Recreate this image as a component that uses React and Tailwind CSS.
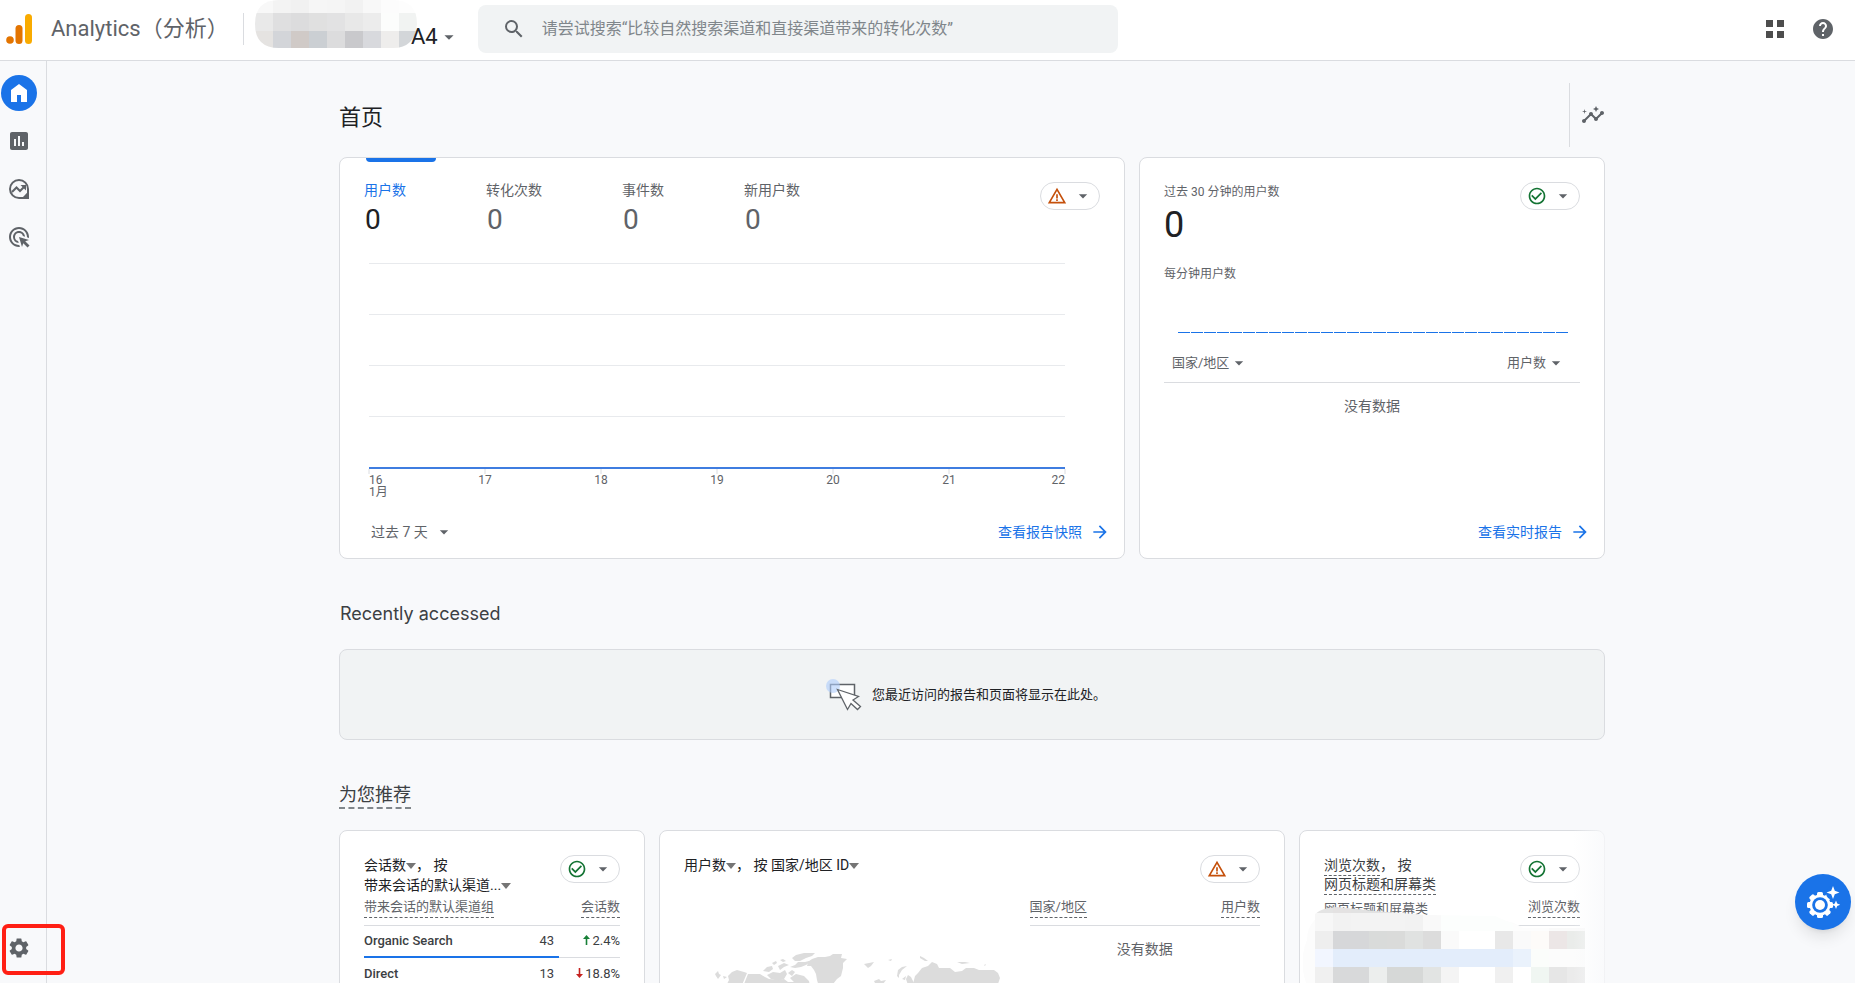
import { useState } from 'react';
import {
  MdAdsClick,
  MdArrowDropDown,
  MdArrowForward,
  MdCheckCircleOutline,
  MdHelp,
  MdInsertChart,
  MdInsights,
  MdSearch,
  MdSettings,
  MdWarningAmber,
} from 'react-icons/md';

const METRICS = [
  { label: '用户数', value: 0 },
  { label: '转化次数', value: 0 },
  { label: '事件数', value: 0 },
  { label: '新用户数', value: 0 },
];

const DAYS = ['16', '17', '18', '19', '20', '21', '22'];

const CHANNELS = [
  { name: 'Organic Search', value: 43, change: '2.4%', up: true, share: 76 },
  { name: 'Direct', value: 13, change: '18.8%', up: false, share: 23 },
];

// Pixel blocks that hide the account name
const ACCOUNT_BLOCKS = [
  ['#f8f8f8', '#f3f3f3', '#f1f1f1', '#f6f6f6', '#f5f5f5', '#f2f2f2', '#f8f8f8', '#fcfcfc', '#fdfdfd'],
  ['#e9e9e9', '#dfdfe0', '#dcdcdd', '#e0e0e0', '#e2e2e3', '#e8e8e8', '#ececec', '#fcfdfc', '#f1f3f2'],
  ['#e5e3e1', '#d3d5d9', '#d0cac7', '#cbcfd3', '#dcdcdd', '#c9c9cc', '#d8d9dd', '#eeedec', '#d3d6d9'],
];

// Pixel blocks that hide the page titles
const PAGE_BLOCKS = [
  ['#e4e4e4', '#e4e2e2', '#e2e2e2', '#e2e2e2', '#e0e0e0', '#dedede', '#fafafa', '#fdfffe', '#fdfffe', '#fdfffe', '#fdfffe', '#fefefe', '#fefefe', '#fefefe', '#fefefe'],
  ['#f7f7f7', '#f2f2f2', '#f3f3f3', '#f3f3f3', '#f3f3f3', '#f2f2f2', '#f9f9f9', '#fcfefd', '#fcfefd', '#fcfefd', '#fcfefd', '#fdfdfd', '#fdfdfd', '#fafafa', '#fafafa'],
  ['#eeeeee', '#d6d7d9', '#d6d7d9', '#d9dbda', '#dadbda', '#e0e2e1', '#dcdcdc', '#fafafa', '#ffffff', '#ffffff', '#e8e8e8', '#fafafa', '#fdfbf9', '#ece6e6', '#eaecea'],
  ['#f2f6ff', '#e3edfb', '#e3edfb', '#e3edfb', '#e3edfb', '#e3edfb', '#e3edfb', '#e3edfb', '#e3edfb', '#e3edfb', '#e3edfb', '#eaf2fc', '#fbfdfb', '#fcfcfc', '#fcfcfc'],
  ['#f0f0f0', '#d8d9da', '#d8d9da', '#eceeed', '#d6d8d7', '#d6d8d7', '#e2e4e3', '#f4f4f4', '#ffffff', '#ffffff', '#f0f0f0', '#ffffff', '#f0f6f2', '#e6e6e6', '#ebebeb'],
];

function Blocks({ rows, top }) {
  return rows.map((row, y) =>
    row.map((fill, x) => (
      <rect key={`${x}-${y}`} x={x * 18} y={top + y * 18} width="18" height="18" fill={fill} shapeRendering="crispEdges" />
    ))
  );
}

function AnalyticsLogo() {
  return (
    <svg className="h-8 w-7 shrink-0" viewBox="0 0 28 32" aria-hidden="true">
      <rect x="19" y="1" width="7" height="30" rx="3.5" fill="#f9ab00" />
      <rect x="9.5" y="12" width="7" height="19" rx="3.5" fill="#e37400" />
      <circle cx="4" cy="27" r="3.8" fill="#e37400" />
    </svg>
  );
}

function Header() {
  return (
    <header className="flex h-[61px] shrink-0 items-center border-b border-[#dadce0] bg-white pb-0.5 pl-1.5 pr-2">
      <AnalyticsLogo />
      <span className="ml-[17px] whitespace-nowrap text-[22px] leading-8 text-[#5f6368]">Analytics（分析）</span>
      <div className="ml-[14px] h-8 w-px bg-[#dadce0]" />
      <button type="button" className="relative ml-[11px] flex h-12 w-[205px] items-center justify-end self-start pt-[26px] text-[22px] leading-[22px] text-[#202124]">
        <svg className="absolute left-0 top-0 h-12 w-[162px]" viewBox="0 0 162 48" aria-hidden="true">
          <clipPath id="account-shape">
            <path d="M24 0H138Q162 0 162 24Q160 48 138 48H24Q0 48 0 24Q0 0 24 0Z" />
          </clipPath>
          <g clipPath="url(#account-shape)">
            <Blocks rows={ACCOUNT_BLOCKS} top={-5} />
          </g>
        </svg>
        <span className="relative">A4</span>
        <MdArrowDropDown className="size-[22px] text-[#5f6368]" />
      </button>
      <form className="ml-[18px] flex h-12 w-[640px] items-center rounded-lg bg-[#f1f3f4] pl-6" role="search">
        <MdSearch className="size-6 shrink-0 text-[#5f6368]" />
        <input
          type="search"
          aria-label="搜索"
          placeholder="请尝试搜索“比较自然搜索渠道和直接渠道带来的转化次数”"
          className="ml-4 min-w-0 flex-1 bg-transparent text-base text-[#202124] outline-none placeholder:text-[#80868b]"
        />
      </form>
      <div className="ml-auto flex items-center gap-6">
        <button type="button" aria-label="应用" className="flex size-6 items-center justify-center text-[#4d4d4d]">
          <svg className="size-[18px]" viewBox="0 0 18 18" fill="currentColor">
            <path d="M0 0h7v7H0zM11 0h7v7h-7zM0 11h7v7H0zM11 11h7v7h-7z" />
          </svg>
        </button>
        <button type="button" aria-label="帮助" className="mr-3 text-[#5f6368]">
          <MdHelp className="size-6" />
        </button>
      </div>
    </header>
  );
}

function HomeIcon() {
  return (
    <svg className="size-6" viewBox="0 0 24 24" fill="currentColor">
      <path d="M4 21V9l8-6 8 6v12h-6v-7h-4v7H4Z" />
    </svg>
  );
}

function ExploreIcon() {
  return (
    <svg className="size-6" viewBox="0 0 24 24" fill="none" stroke="currentColor" strokeWidth="2">
      <path d="M21 12a9 9 0 1 0-9 9h9z" />
      <path d="M15.5 20.5L20.8 15v6z" fill="currentColor" stroke="none" />
      <path d="M5 15l4.5-4.5 3.5 3.5 5-5" />
      <path d="M13.5 8H19v5.5z" fill="currentColor" stroke="none" />
    </svg>
  );
}

function Sidebar() {
  return (
    <nav className="flex w-[47px] shrink-0 flex-col gap-3 border-r border-[#dadce0] pb-[17px] pl-px pt-[14px] text-[#5f6368]">
      <a href="#home" aria-label="首页" className="flex size-9 items-center justify-center rounded-full bg-[#1a73e8] text-white">
        <HomeIcon />
      </a>
      <a href="#reports" aria-label="报告" className="flex size-9 items-center justify-center">
        <MdInsertChart className="size-6" />
      </a>
      <a href="#explore" aria-label="探索" className="flex size-9 items-center justify-center">
        <ExploreIcon />
      </a>
      <a href="#ads" aria-label="广告" className="flex size-9 items-center justify-center">
        <MdAdsClick className="size-6" />
      </a>
      <a href="#admin" aria-label="管理" className="relative mt-auto flex size-9 items-center justify-center">
        <MdSettings className="size-6" />
        <span className="absolute -top-1.5 left-px z-10 h-[51px] w-[63px] rounded-md border-4 border-[#ff1f14]" />
      </a>
    </nav>
  );
}

function Card({ className = '', children }) {
  return <section className={`relative flex flex-col rounded-lg border border-[#dadce0] bg-white px-6 ${className}`}>{children}</section>;
}

function StatusButton({ warning = false }) {
  return (
    <button
      type="button"
      aria-label={warning ? '数据警告' : '数据正常'}
      className="flex h-7 w-[60px] shrink-0 items-center justify-between rounded-full border border-[#dadce0] bg-white px-1.5"
    >
      {warning ? <MdWarningAmber className="size-5 text-[#c5500b]" /> : <MdCheckCircleOutline className="size-5 text-[#137333]" />}
      <MdArrowDropDown className="size-5 text-[#5f6368]" />
    </button>
  );
}

function CardLink({ href, children }) {
  return (
    <a href={href} className="-mr-2.5 flex items-center gap-2 text-sm leading-5 text-[#1a73e8]">
      {children}
      <MdArrowForward className="size-5" />
    </a>
  );
}

function Caret() {
  return (
    <svg className="inline-block h-1.5 w-2.5 align-middle" viewBox="0 0 10 6" fill="#757575" aria-hidden="true">
      <path d="M0 0h10L5 6z" />
    </svg>
  );
}

function TrendArrow({ up }) {
  return up ? (
    <svg className="mr-0.5 inline-block h-2.5 w-[7px] align-baseline" viewBox="0 0 7 10" fill="#188038" aria-label="上升">
      <path d="M3.500 0L7 4H4.300v6H2.700V4H0z" />
    </svg>
  ) : (
    <svg className="mr-0.5 inline-block h-2.5 w-[7px] align-baseline" viewBox="0 0 7 10" fill="#c5221f" aria-label="下降">
      <path d="M3.500 10L0 6h2.700V0h1.600v6H7z" />
    </svg>
  );
}

function LineChart() {
  return (
    <svg className="h-[240px] w-full overflow-visible" role="img" aria-label="用户数">
      {[0, 51, 102, 153].map((y) => (
        <rect key={y} x="0" y={y} width="100%" height="1" fill="#e8eaed" />
      ))}
      {DAYS.map((day, i) => {
        const x = `${(i * 100) / 6}%`;
        return <line key={day} x1={x} x2={x} y1="206" y2="211" stroke="#dadce0" />;
      })}
      <rect x="0" y="204" width="100%" height="2" fill="#3f7de0" />
      {DAYS.map((day, i) => (
        <text
          key={day}
          x={`${(i * 100) / 6}%`}
          y="221"
          fill="#5f6368"
          className="text-xs"
          textAnchor={i === 0 ? 'start' : i === 6 ? 'end' : 'middle'}
        >
          {day}
        </text>
      ))}
      <text x="0" y="233" fill="#5f6368" className="text-xs">
        1月
      </text>
    </svg>
  );
}

function OverviewCard() {
  const [active, setActive] = useState(0);

  return (
    <Card className="col-span-5">
      <div className="flex items-start justify-between">
        <div className="flex gap-20">
          {METRICS.map((metric, i) => (
            <button
              key={metric.label}
              type="button"
              onClick={() => setActive(i)}
              className="relative flex flex-col gap-1 pt-[22px] text-left text-[#5f6368]"
            >
              {i === active && <span className="absolute left-0.5 top-0 h-1 w-[70px] rounded-b bg-[#1a73e8]" />}
              <span className={`text-sm leading-5 ${i === active ? 'text-[#1a73e8]' : ''}`}>{metric.label}</span>
              <span className={`pl-px text-[28px] leading-8 ${i === active ? 'text-[#202124]' : ''}`}>{metric.value}</span>
            </button>
          ))}
        </div>
        <div className="pt-6">
          <StatusButton warning />
        </div>
      </div>
      <div className="mt-[27px] pl-[5px] pr-[35px]">
        <LineChart />
      </div>
      <div className="mb-4 mt-[19px] flex items-center justify-between">
        <div className="relative ml-[7px] flex items-center">
          <select aria-label="日期范围" className="appearance-none bg-transparent pr-[26px] text-sm leading-5 text-[#5f6368]">
            <option>过去 7 天</option>
          </select>
          <MdArrowDropDown className="pointer-events-none absolute right-0 size-5 text-[#5f6368]" />
        </div>
        <CardLink href="#snapshot">查看报告快照</CardLink>
      </div>
    </Card>
  );
}

function RealtimeCard() {
  return (
    <Card className="col-span-3">
      <div className="flex items-start justify-between pt-6">
        <div>
          <h2 className="text-xs leading-5 text-[#5f6368]">过去 30 分钟的用户数</h2>
          <p className="text-4xl leading-[46px] text-[#202124]">0</p>
        </div>
        <StatusButton />
      </div>
      <h3 className="mt-4 text-xs leading-5 text-[#5f6368]">每分钟用户数</h3>
      <div className="mt-12 flex gap-px pl-[14px] pr-3">
        {Array.from({ length: 30 }, (_, i) => (
          <span key={i} className="h-px flex-1 bg-[#1a73e8]" />
        ))}
      </div>
      <table className="mt-[15px] w-full text-[13px] leading-5 text-[#5f6368]">
        <thead>
          <tr className="h-[34px] border-b border-[#dadce0]">
            <th className="pb-1 pl-2 text-left font-normal">
              <button type="button" className="inline-flex items-center">
                国家/地区
                <MdArrowDropDown className="size-5" />
              </button>
            </th>
            <th className="pb-1 pr-[14px] text-right font-normal">
              <button type="button" className="inline-flex items-center">
                用户数
                <MdArrowDropDown className="size-5" />
              </button>
            </th>
          </tr>
        </thead>
        <tbody>
          <tr className="h-12">
            <td colSpan="2" className="text-center text-sm">
              没有数据
            </td>
          </tr>
        </tbody>
      </table>
      <div className="mb-4 mt-auto flex justify-end">
        <CardLink href="#realtime">查看实时报告</CardLink>
      </div>
    </Card>
  );
}

function RecentlyAccessed() {
  return (
    <section className="mt-[43px]">
      <h2 className="pl-px font-['Inter',sans-serif] text-lg leading-6 text-[#3c4043]">Recently accessed</h2>
      <div className="mt-[23px] flex h-[91px] items-center justify-center gap-2.5 rounded-lg border border-[#dadce0] bg-[#f1f3f4] pr-3">
        <svg className="h-8 w-9" viewBox="0 0 36 32" aria-hidden="true">
          <path d="M4.500 5.500h24v13h-24z" fill="#fff" stroke="#5f6368" strokeWidth="1.500" />
          <circle cx="7" cy="7" r="7" fill="#aecbfa" fillOpacity=".6" />
          <path d="M11.500 10.500l21 7-5.500 3.500 7.500 6.500-3 3-6.500-6-3.500 6z" fill="#fff" stroke="#5f6368" strokeWidth="1.300" />
        </svg>
        <p className="text-[13px] leading-5 text-[#202124]">您最近访问的报告和页面将显示在此处。</p>
      </div>
    </section>
  );
}

function ChannelsCard() {
  return (
    <Card className="h-[340px]">
      <div className="flex items-start justify-between pt-6">
        <h3 className="text-sm leading-5 text-[#202124]">
          <button type="button">
            会话数
            <Caret />
          </button>
          ， 按
          <br />
          <button type="button">
            带来会话的默认渠道...
            <Caret />
          </button>
        </h3>
        <StatusButton />
      </div>
      <table className="mt-0.5 w-full text-[13px] leading-4 text-[#3c4043]">
        <thead className="text-[#5f6368]">
          <tr className="h-7 border-b border-[#dadce0]">
            <th colSpan="2" className="pb-1 text-left font-normal">
              <span className="inline-block border-b border-dashed border-[#5f6368] pb-0.5">带来会话的默认渠道组</span>
            </th>
            <th className="pb-1 text-right font-normal">
              <span className="inline-block border-b border-dashed border-[#5f6368] pb-0.5">会话数</span>
            </th>
          </tr>
        </thead>
        {CHANNELS.map((row) => (
          <tbody key={row.name}>
            <tr className="h-[31px]">
              <td className="font-medium">{row.name}</td>
              <td className="text-right">{row.value}</td>
              <td className="w-[66px] whitespace-nowrap text-right">
                <TrendArrow up={row.up} />
                {row.change}
              </td>
            </tr>
            <tr>
              <td colSpan="3">
                <div className="flex items-center">
                  <span className="h-0.5 bg-[#1a73e8]" style={{ width: `${row.share}%` }} />
                  <span className="h-px flex-1 bg-[#dadce0]" />
                </div>
              </td>
            </tr>
          </tbody>
        ))}
      </table>
    </Card>
  );
}

function WorldMap() {
  return (
    <svg className="h-[180px] w-[300px] overflow-visible" viewBox="0 0 300 180" fill="#dcdcdc" aria-hidden="true">
      {/* Alaska and Canada */}
      <path d="M1 15l3-3 1 3 2 1-3 4-2-3zM9 17l4 1-3 2zM13 25l2-4-1-4 4-4 5-2 7 2 3 1-5 12zM30 25l4-10 12 0 5 3 4 2 9 1 6-1 4 3 8 0v6H30z" />
      <path d="M49 12l4-4 5-1 1 3-4 3zM58 4l4-2 1 2-3 2zM64 7l6-3 5 2-5 2-4 3zM66 1l3-1 3 2-3 1z" />
      <path d="M53 16l6-3 7 1 5-3 2 4-3 5-6 2-7-2zM74 14l4-3 3 2-3 4zM76 19l6-4 8 2 5 5 1 5-8-2-6 0z" />
      <path d="M76 8l5-2 3-3 7 0 8-2-7 5-5 2-6 1zM78-1l4-3 8-2 11 0-3 3-6 2-6 3-5 0z" />
      {/* Greenland */}
      <path d="M93 7l1-4 4-3 6-2 7 0 5-1 3-2 9 0-1 4 6 1-4 4 0 5-2 8-4 3-4 5v6h-13l-3-10-1-6-2-4-3-4z" />
      {/* Arctic islands */}
      <path d="M150 5l5-1 5-1-3 4-3 2zM174 1l4-1-1 2zM160 22l5-2 2 2 5-1-3 4-7 1zM206-3l4 2 4 3-3 0-5-3zM243 3l8 0 5 1-8 1zM270 6l2-1-1 2z" />
      <path d="M183 17l1-6 4-3 5-1-5 4-3 5 0 3zM194 16l3 2 3 6-6 2-2-6zM188 20l4-3-1 4z" />
      {/* Russia */}
      <path d="M199 25l2-8 3-3 4-5 6-2 4-4 5 2 2 4 5 0 6 0 5 4 7-1 4-3 8 0 5 2 9 0 6 0 4 3 2 5-2 6v14h-85z" />
    </svg>
  );
}

function CountriesCard() {
  return (
    <Card className="col-span-2 h-[340px]">
      <div className="flex items-start justify-between pt-6">
        <h3 className="text-sm leading-5 text-[#202124]">
          <button type="button">
            用户数
            <Caret />
          </button>
          ， 按{' '}
          <button type="button">
            国家/地区 ID
            <Caret />
          </button>
        </h3>
        <StatusButton warning />
      </div>
      <div className="mt-[14px] flex items-start justify-between">
        <div className="pl-[30px] pt-[62px]">
          <WorldMap />
        </div>
        <table className="w-2/5 text-[13px] leading-4 text-[#5f6368]">
          <thead>
            <tr className="h-7 border-b border-[#dadce0]">
              <th className="pb-1 text-left font-normal">
                <span className="inline-block border-b border-dashed border-[#5f6368] pb-0.5">国家/地区</span>
              </th>
              <th className="pb-1 text-right font-normal">
                <span className="inline-block border-b border-dashed border-[#5f6368] pb-0.5">用户数</span>
              </th>
            </tr>
          </thead>
          <tbody>
            <tr className="h-12">
              <td colSpan="2" className="text-center text-sm">
                没有数据
              </td>
            </tr>
          </tbody>
        </table>
      </div>
    </Card>
  );
}

function PagesCard() {
  return (
    <Card className="h-[340px]">
      <div className="flex items-start justify-between pt-6">
        <h3 className="pt-0.5 text-sm leading-4 text-[#3c4043]">
          <span className="inline-block border-b border-dashed border-[#5f6368] pb-0.5">浏览次数</span>， 按
          <br />
          <span className="inline-block border-b border-dashed border-[#5f6368] pb-0.5">网页标题和屏幕类</span>
        </h3>
        <StatusButton />
      </div>
      <table className="mt-0.5 w-full text-[13px] leading-4 text-[#5f6368]">
        <thead>
          <tr className="h-7 border-b border-[#dadce0]">
            <th className="pb-1 text-left font-normal">网页标题和屏幕类</th>
            <th className="pb-1 text-right font-normal">
              <span className="inline-block border-b border-dashed border-[#5f6368] pb-0.5">浏览次数</span>
            </th>
          </tr>
        </thead>
      </table>
      <svg className="absolute left-[3px] top-[73px] h-[86px] w-[290px]" viewBox="-12 0 290 86" aria-hidden="true">
        <clipPath id="pages-shape">
          <path d="M0 10Q6 4 22 3L60 7 112 11 180 12 208 24H270V86H0Z" />
        </clipPath>
        <path d="M-8 36Q-8 12 22 4L110 12Q190 10 208 24L270 26V86H-6Q-18 60-8 36Z" fill="#fcfcfc" />
        <g clipPath="url(#pages-shape)">
          <Blocks rows={PAGE_BLOCKS} top={-9} />
        </g>
      </svg>
      <div className="pointer-events-none absolute -inset-y-px -right-px w-8 bg-gradient-to-r from-transparent to-[#f8f9fb]/80" />
    </Card>
  );
}

function AssistantIcon() {
  return (
    <svg className="size-10" viewBox="0 0 40 40" fill="#fff" aria-hidden="true">
      {[0, 45, 90, 135].map((angle) => (
        <rect key={angle} x="14" y="10" width="6" height="26" rx="1.500" transform={`rotate(${angle} 17 23)`} />
      ))}
      <circle cx="17" cy="23" r="10.500" />
      <circle cx="17" cy="23" r="7.800" fill="#1a73e8" />
      <circle cx="17" cy="23" r="5" />
      <circle cx="30" cy="11" r="7" fill="#1a73e8" />
      <path d="M30 4l1.800 4.700 4.700 1.800-4.700 1.800L30 17l-1.800-4.700-4.700-1.800 4.700-1.800zM33 18.500l1.200 3 3 1.200-3 1.200-1.200 3-1.200-3-3-1.200 3-1.200z" />
    </svg>
  );
}

function App() {
  return (
    <div className="flex h-screen flex-col bg-[#f8f9fb] font-['Roboto','Noto_Sans_CJK_SC',sans-serif] text-[#202124]">
      <Header />
      <div className="flex min-h-0 flex-1">
        <Sidebar />
        <main className="min-w-0 flex-1 overflow-y-auto pl-[42px] [scrollbar-width:none]">
          <div className="mx-auto w-full max-w-[1266px]">
            <div className="mb-2.5 mt-[22px] flex h-16 items-center justify-between">
              <h1 className="pt-1.5 text-[22px] leading-8">首页</h1>
              <div className="flex h-full items-center border-l border-[#dadce0] pl-[11px]">
                <button type="button" aria-label="数据洞察" className="text-[#5f6368]">
                  <MdInsights className="size-6" />
                </button>
              </div>
            </div>
            <div className="grid grid-cols-8 gap-3.5">
              <OverviewCard />
              <RealtimeCard />
            </div>
            <RecentlyAccessed />
            <h2 className="mb-[21px] mt-[43px]">
              <span className="inline-block border-b-2 border-dashed border-[#80868b] text-lg leading-6 text-[#3c4043]">为您推荐</span>
            </h2>
            <div className="grid grid-cols-4 gap-3.5 pb-6">
              <ChannelsCard />
              <CountriesCard />
              <PagesCard />
            </div>
          </div>
        </main>
      </div>
      <button
        type="button"
        aria-label="设置助理"
        className="fixed bottom-[53px] right-1 flex size-14 items-center justify-center rounded-full bg-[#1a73e8] shadow-lg"
      >
        <AssistantIcon />
      </button>
    </div>
  );
}

export default App;
